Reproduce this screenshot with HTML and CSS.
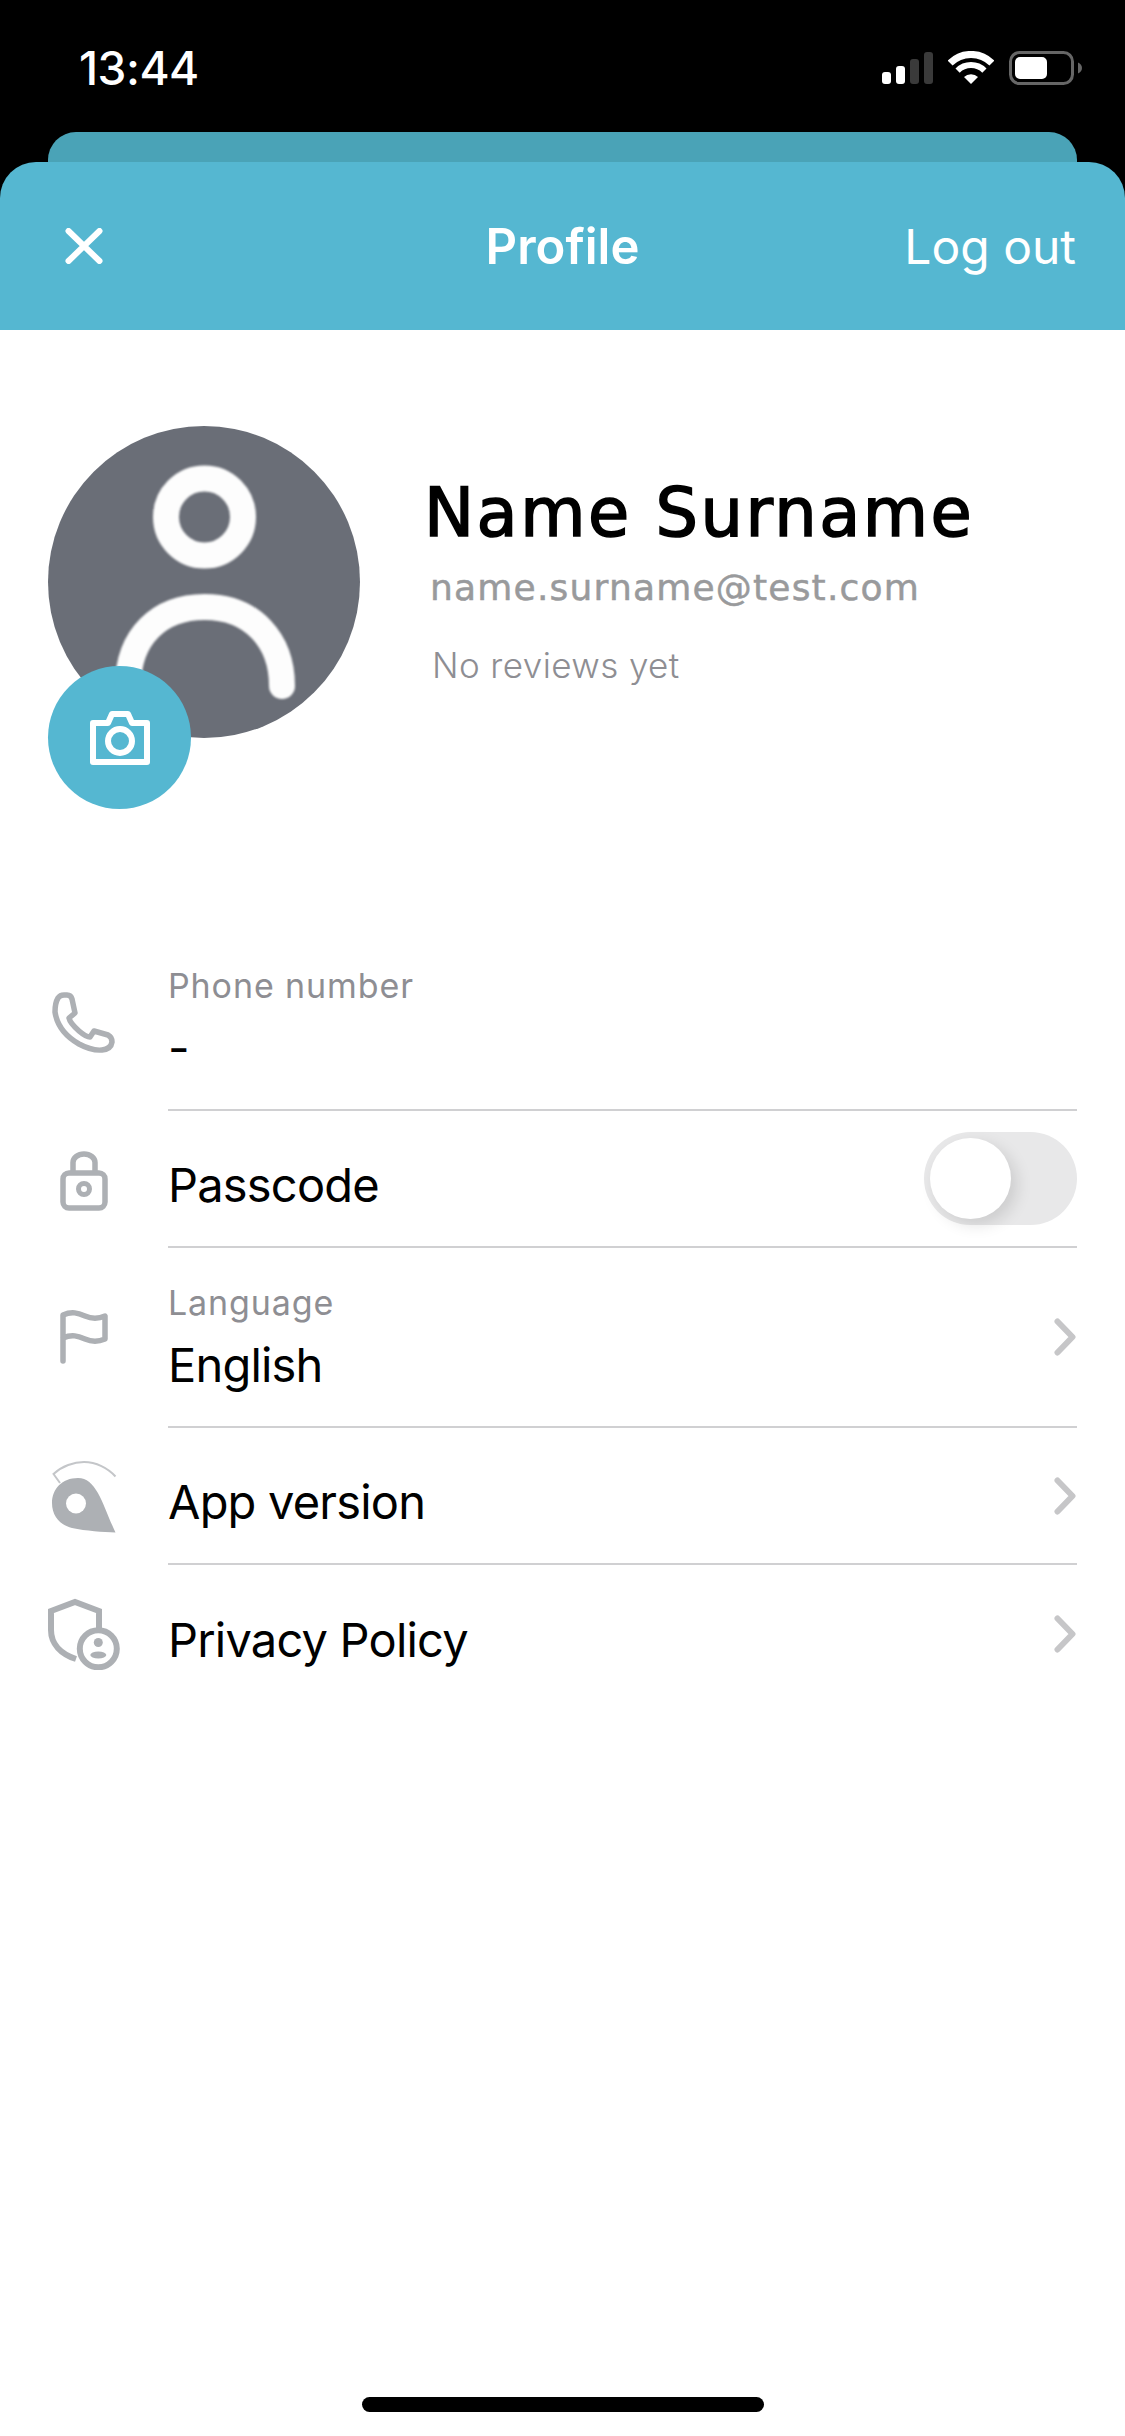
FILE: index.html
```html
<!DOCTYPE html>
<html lang="en">
<head>
    <meta charset="UTF-8">
    <meta name="viewport" content="width=device-width, initial-scale=1.0">
    <title>Profile</title>
    <link rel="stylesheet" href="styles.css">
</head>
<body>

    <div class="page">
        <div class="top">
            <div class="status-bar">
                <span class="time">13:44</span>
                <div class="status-icons">
                    <svg width="51" height="32" viewBox="0 0 51 32">
                        <rect x="0" y="20" width="9" height="12" rx="3" fill="#fff"/>
                        <rect x="14" y="14" width="9" height="18" rx="3" fill="#fff"/>
                        <rect x="28" y="7" width="9" height="25" rx="3" fill="#3a3a3a"/>
                        <rect x="42" y="0" width="9" height="32" rx="3" fill="#3a3a3a"/>
                    </svg>
                    <svg width="46" height="34" viewBox="0 0 46 34" fill="none" stroke="#fff">
                        <path d="M2.100 12.100A29.500 29.500 0 0 1 43.900 12.100" stroke-width="7"/>
                        <path d="M9.600 19.600A19 19 0 0 1 36.400 19.600" stroke-width="6"/>
                        <path d="M23 33L16 26A10 10 0 0 1 30 26Z" fill="#fff" stroke="none"/>
                    </svg>
                    <svg width="73" height="34" viewBox="0 0 73 34">
                        <rect x="1.500" y="1.500" width="62" height="31" rx="9" fill="none" stroke="#666" stroke-width="3"/>
                        <rect x="6" y="6" width="32" height="22" rx="5" fill="#fff"/>
                        <path d="M69 11.500C71.500 12.500 73 14.500 73 17C73 19.500 71.500 21.500 69 22.500Z" fill="#666"/>
                    </svg>
                </div>
            </div>
            <div class="sheet-back"></div>
            <div class="header">
                <svg class="close-icon" width="38" height="36" viewBox="0 0 38 36">
                    <path d="M3.500 3L34.500 33M34.500 3L3.500 33" stroke="#fff" stroke-width="6" stroke-linecap="round"/>
                </svg>
                <h1>Profile</h1>
                <span class="logout">Log out</span>
            </div>
        </div>

        <div class="profile">
            <div class="avatar">
                <svg width="312" height="312" viewBox="0 0 312 312" fill="none" stroke="#fdfdfd" stroke-width="26" stroke-linecap="round">
                    <circle cx="156.500" cy="91" r="38.500"/>
                    <path d="M80 260C80 210 112 181 156.500 181C205 181 234 215 234 260"/>
                </svg>
                <div class="camera">
                    <svg width="60" height="54" viewBox="0 0 60 54" fill="none" stroke="#fff" stroke-width="6" stroke-linejoin="round">
                        <path d="M3 12H18L22 3H38L42 12H57V51H3Z"/>
                        <circle cx="30" cy="30" r="12"/>
                    </svg>
                </div>
            </div>
            <div class="user-info">
                <div class="user-name">Name Surname</div>
                <div class="user-email">name.surname@test.com</div>
                <div class="user-reviews">No reviews yet</div>
            </div>
        </div>

        <div class="settings">
            <div class="row row-phone">
                <svg class="row-icon" width="72" height="72" viewBox="0 0 72 72" fill="none" stroke="#adb0b4" stroke-width="5.500" stroke-linejoin="round">
                    <path d="M10 8Q12 5 16 5H19Q23 5 24 9L27 23L21 28Q22 33 31 41Q38 47 42 47L46 41L60 45Q64 47 64 52Q63 59 54 60Q44 61 31 54Q10 42 7 22Q7 13 10 8Z"/>
                </svg>
                <div class="row-body">
                    <div class="row-text">
                        <div class="row-label">Phone number</div>
                        <div class="row-value">-</div>
                    </div>
                </div>
            </div>
            <div class="row">
                <svg class="row-icon" width="72" height="72" viewBox="0 0 72 72" fill="none" stroke="#adb0b4" stroke-width="5.500">
                    <rect x="15" y="29" width="42" height="35" rx="6"/>
                    <path d="M25 29V18.500a11 8.500 0 0 1 22 0V29"/>
                    <circle cx="36" cy="45" r="5.500" stroke-width="5"/>
                </svg>
                <div class="row-body">
                    <div class="row-value">Passcode</div>
                    <div class="toggle"><div class="knob"></div></div>
                </div>
            </div>
            <div class="row row-language">
                <svg class="row-icon" width="72" height="72" viewBox="0 0 72 72" fill="none" stroke="#adb0b4" stroke-width="5.500" stroke-linecap="round" stroke-linejoin="round">
                    <path d="M15 59V13C24 9 30 11 37 14C44 17 50 17 57 14V37C50 40 44 40 37 37C30 34 24 32 15 36"/>
                </svg>
                <div class="row-body">
                    <div class="row-text">
                        <div class="row-label">Language</div>
                        <div class="row-value">English</div>
                    </div>
                    <svg class="chevron" width="22" height="38" viewBox="0 0 22 38">
                        <path d="M3.500 3.500L18.500 19L3.500 34.500" fill="none" stroke="#c6c6c8" stroke-width="6" stroke-linecap="round" stroke-linejoin="round"/>
                    </svg>
                </div>
            </div>
            <div class="row">
                <svg class="row-icon" width="72" height="72" viewBox="0 0 72 72">
                    <path d="M67.500 71.500C55 45 49 17 30 17C14 17 4 28 4 42C4 55 12 64 24 67C38 70 55 71 67.500 71.500Z" fill="#adb0b4"/>
                    <circle cx="28" cy="42.500" r="10" fill="#fff"/>
                    <path d="M12 22L5.500 13C14 5 26 1 36 1C48 1 60 7 67.500 15.500" fill="none" stroke="#c4c6c9" stroke-width="2"/>
                </svg>
                <div class="row-body">
                    <div class="row-value">App version</div>
                    <svg class="chevron" width="22" height="38" viewBox="0 0 22 38">
                        <path d="M3.500 3.500L18.500 19L3.500 34.500" fill="none" stroke="#c6c6c8" stroke-width="6" stroke-linecap="round" stroke-linejoin="round"/>
                    </svg>
                </div>
            </div>
            <div class="row row-last">
                <svg class="row-icon" width="72" height="72" viewBox="0 0 72 72" fill="none" stroke="#adb0b4" stroke-width="6">
                    <path d="M51 30V13L27 4L3 13V32C3 46 13 56 28 61"/>
                    <circle cx="50.300" cy="50.800" r="18.500" fill="#fff"/>
                    <circle cx="50.300" cy="44.500" r="4.500" fill="#adb0b4" stroke="none"/>
                    <ellipse cx="50.300" cy="57" rx="8" ry="3.500" fill="#adb0b4" stroke="none"/>
                </svg>
                <div class="row-body">
                    <div class="row-value">Privacy Policy</div>
                    <svg class="chevron" width="22" height="38" viewBox="0 0 22 38">
                        <path d="M3.500 3.500L18.500 19L3.500 34.500" fill="none" stroke="#c6c6c8" stroke-width="6" stroke-linecap="round" stroke-linejoin="round"/>
                    </svg>
                </div>
            </div>
        </div>

        <div class="home-bar"></div>
    </div>

</body>
</html>
```

FILE: styles.css
```css
body {
    margin: 0;
    padding: 0;
    background-color: #fff;
    font-family: 'Inter', 'Liberation Sans', sans-serif;
}
.page {
    display: flex;
    flex-direction: column;
    height: 2436px;
    overflow: hidden;
}
.top {
    background-color: #000;
}
.status-bar {
    display: flex;
    justify-content: space-between;
    align-items: center;
    height: 132px;
    padding: 0 43px 0 79px;
    box-sizing: border-box;
}
.time {
    color: #fff;
    font-size: 46px;
    font-weight: 500;
    letter-spacing: -0.5px;
    margin-top: 4px;
}
.status-icons {
    display: flex;
    align-items: center;
    gap: 15px;
    margin-top: 4px;
}
.sheet-back {
    height: 30px;
    margin: 0 48px;
    background-color: #4aa3b7;
    border-radius: 28px 28px 0 0;
}
.header {
    display: flex;
    align-items: center;
    justify-content: space-between;
    position: relative;
    height: 168px;
    padding: 0 49px 0 65px;
    background-color: #55b7d1;
    border-radius: 36px 36px 0 0;
    color: #fff;
}
.header h1 {
    position: absolute;
    left: 0;
    right: 0;
    margin: 0;
    text-align: center;
    font-size: 49px;
    font-weight: 600;
}
.logout {
    font-size: 48px;
    font-weight: 400;
}
.profile {
    display: flex;
    padding: 96px 0 0 48px;
    height: 514px;
}
.avatar {
    position: relative;
    flex-shrink: 0;
    width: 312px;
    height: 312px;
    border-radius: 50%;
    background-color: #6a6e77;
}
.avatar > svg {
    display: block;
    filter: blur(1px);
}
.camera {
    position: absolute;
    left: 0;
    top: 240px;
    display: flex;
    align-items: center;
    justify-content: center;
    width: 143px;
    height: 143px;
    border-radius: 50%;
    background-color: #55b7d1;
}
.user-info {
    margin-left: 64px;
    padding-top: 43px;
}
.user-name {
    font-family: 'DejaVu Sans', sans-serif;
    font-size: 67px;
    line-height: 88px;
    letter-spacing: 2.5px;
    color: #000;
    -webkit-text-stroke: 1.6px #000;
}
.user-email {
    font-family: 'DejaVu Sans', sans-serif;
    font-size: 36px;
    line-height: 44px;
    letter-spacing: 1.2px;
    color: #999a9c;
    margin-left: 6px;
    margin-top: 9px;
    -webkit-text-stroke: 0.5px #999a9c;
}
.user-reviews {
    font-size: 35px;
    font-weight: 300;
    line-height: 44px;
    letter-spacing: 0.4px;
    color: #8e8e93;
    margin-left: 8px;
    margin-top: 33px;
}
.settings {
    display: flex;
    flex-direction: column;
}
.row {
    display: flex;
    align-items: stretch;
    padding: 0 48px;
    height: 137px;
}
.row-phone {
    height: 171px;
}
.row-language {
    height: 180px;
}
.row-icon {
    align-self: center;
    flex-shrink: 0;
    margin-right: 48px;
}
.row-body {
    flex: 1;
    display: flex;
    align-items: center;
    justify-content: space-between;
    border-bottom: 2px solid #d0d0d2;
}
.row-last .row-body {
    border-bottom: none;
}
.row-label {
    font-size: 34px;
    line-height: 42px;
    letter-spacing: 0.9px;
    color: #8e8e93;
}
.row-value {
    font-size: 47px;
    line-height: 58px;
    letter-spacing: -0.8px;
    color: #000;
}
.row-body > .row-value {
    margin-top: 12px;
}
.row-text .row-value {
    margin-top: 12px;
}
.row-phone .row-text {
    padding-bottom: 8px;
}
.row-language .row-text {
    padding-top: 2px;
}
.toggle {
    width: 153px;
    height: 93px;
    border-radius: 47px;
    background-color: #e8e8e9;
    padding: 6px;
    box-sizing: border-box;
}
.knob {
    width: 81px;
    height: 81px;
    border-radius: 50%;
    background-color: #fff;
    box-shadow: 6px 6px 16px rgba(0, 0, 0, 0.12);
}
.chevron {
    margin-right: 1px;
}
.home-bar {
    width: 402px;
    height: 15px;
    margin: auto auto 24px;
    border-radius: 8px;
    background-color: #000;
}
```
